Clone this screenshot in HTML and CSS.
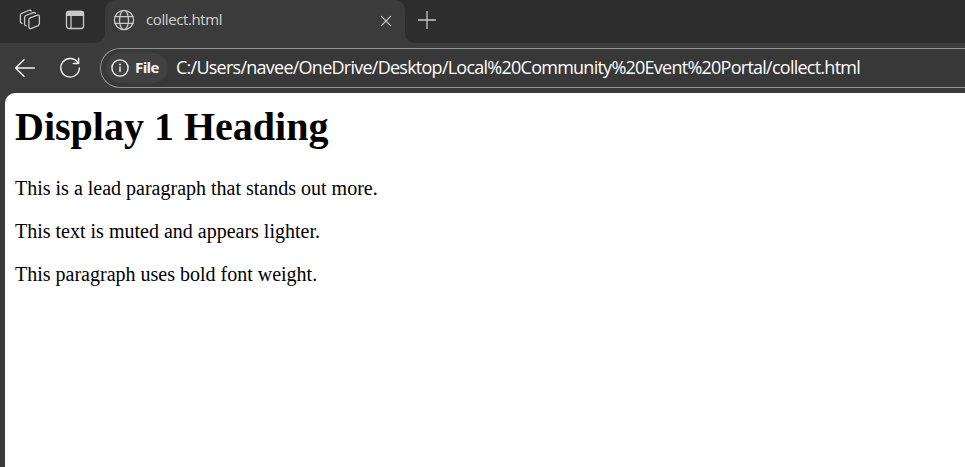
FILE: index.html
```html
<!DOCTYPE html>
<html lang="en">
<head>
<meta charset="utf-8">
<title>collect.html</title>
<link rel="stylesheet" href="styles.css">
</head>
<body>
<div class="browser">
  <header class="tabstrip">
    <div class="left-tools">
      <svg class="workspaces" width="22" height="22" viewBox="0 0 22 22">
        <path d="M10.6 9.2 18.4 6.2Q20.4 5.6 20.4 7.5V14.6Q20.4 16 19.2 16.6L12.4 19.4Q9.9 20.3 9.9 18V10.8Q9.9 9.6 10.6 9.2Z"/>
        <path d="M7.2 16.8Q5.6 16.8 5.6 15V8.2Q5.6 7 6.8 6.5L13.6 3.8Q15.7 3 16.4 4.2"/>
        <path d="M3 14.3Q1.4 14 1.4 12.5V6.1Q1.4 4.9 2.6 4.4L9.6 1.5Q11.6.8 12.2 2"/>
      </svg>
      <svg class="tab-actions" width="20" height="20" viewBox="0 0 20 20">
        <rect x="1.5" y="1.5" width="17" height="17" rx="2.6"/>
        <path class="solid" d="M1.5 5.4V3.5Q1.5 1.5 3.5 1.5H16.5Q18.5 1.5 18.5 3.5V5.4Z"/>
        <path d="M6 6V18.5"/>
      </svg>
    </div>
    <div class="tab">
      <svg class="globe" width="22" height="22" viewBox="0 0 22 22">
        <circle cx="11" cy="11" r="9.6"/>
        <ellipse cx="11" cy="11" rx="4.5" ry="9.6"/>
        <path d="M2 7.7H20M2 14.3H20"/>
      </svg>
      <span class="tab-title">collect.html</span>
      <svg class="close" width="12" height="12" viewBox="0 0 12 12"><path d="M1.4 1.4 10.6 10.6M10.6 1.4 1.4 10.6"/></svg>
    </div>
    <div class="right-tools">
      <svg width="18" height="18" viewBox="0 0 18 18"><path d="M9 .5V17.5M.5 9H17.5"/></svg>
    </div>
  </header>
  <nav class="toolbar">
    <svg class="back" width="22" height="20" viewBox="0 0 22 20"><path d="M10 1.7 1.6 10 10 18.3M1.6 10H20.4"/></svg>
    <svg class="reload" width="22" height="22" viewBox="0 0 22 22"><path d="M19.2 6.2A9.3 9.3 0 1 0 20.4 11M19.6 1.2V6.5H14.3"/></svg>
    <div class="address">
      <div class="chip">
        <svg width="18" height="18" viewBox="0 0 18 18"><circle cx="9" cy="9" r="8.1"/><path d="M9 8V12.6"/><circle class="dot" cx="9" cy="5.5" r="1"/></svg>
        <span class="chip-label">File</span>
      </div>
      <span class="url">C:/Users/navee/OneDrive/Desktop/Local%20Community%20Event%20Portal/collect.html</span>
    </div>
  </nav>
  <main class="page">
    <h1>Display 1 Heading</h1>
    <p>This is a lead paragraph that stands out more.</p>
    <p>This text is muted and appears lighter.</p>
    <p>This paragraph uses bold font weight.</p>
  </main>
</div>
</body>
</html>
```
FILE: styles.css
```css
* { box-sizing: border-box; }
body { margin: 0; overflow: hidden; background: #3b3b3b; }
svg { display: block; flex: none; fill: none; stroke: #c8c8c8; stroke-width: 1.3; stroke-linecap: round; stroke-linejoin: round; }
.browser { height: 467px; display: flex; flex-direction: column; font-family: "Open Sans", "Noto Sans", sans-serif; }
.tabstrip { height: 43px; display: flex; flex: none; background: linear-gradient(#2d2d2d 20px, #3b3b3b 20px); }
.left-tools { width: 105px; height: 43px; background: #2d2d2d; border-bottom-right-radius: 10px; display: flex; align-items: center; padding: 0 0 3px 19px; gap: 24px; }
.solid { fill: #c8c8c8; }
.tab { width: 300px; display: flex; align-items: center; padding: 0 13px 3px 8px; background: #3b3b3b; border-radius: 10px 10px 0 0; }
.tab-title { margin-left: 11px; padding-bottom: 2px; font-size: 15px; line-height: 20px; color: #d2d2d2; white-space: nowrap; letter-spacing: -0.4px; }
.close { margin-left: auto; margin-top: 1px; }
.right-tools { flex: 1; background: #2d2d2d; border-bottom-left-radius: 10px; padding: 11px 0 0 13px; }
.toolbar { height: 50px; flex: none; display: flex; align-items: center; padding-left: 14px; }
.toolbar svg { stroke: #f2f2f2; stroke-width: 1.4; }
.reload { margin-left: 23px; }
.address { flex: 1; height: 40px; margin-left: 19px; border: 1.5px solid #929292; border-right: 0; border-radius: 20px 0 0 20px; display: flex; align-items: center; padding-left: 5px; background: #383838; }
.chip { width: 62px; height: 30px; border-radius: 15px; background: #414141; display: flex; align-items: center; padding-left: 5px; flex: none; }
.toolbar .dot { fill: #f2f2f2; stroke: none; }
.chip-label { margin-left: 6px; padding-bottom: 2px; font-size: 15px; font-weight: 700; line-height: 20px; color: #f5f5f5; letter-spacing: -0.6px; }
.url { margin-left: 8px; padding-bottom: 2px; font-size: 18px; line-height: 24px; color: #fff; white-space: nowrap; letter-spacing: -0.75px; }
.page { flex: 1; margin-left: 5px; background: #fff; border-top-left-radius: 10px; padding: 0 10px; color: #000; font-family: "Liberation Serif", serif; font-size: 20px; }
.page h1 { margin: 10px 0 26px; font-size: 40px; line-height: 48px; font-weight: 700; }
.page p { margin: 0 0 20px; line-height: 23px; }
```
